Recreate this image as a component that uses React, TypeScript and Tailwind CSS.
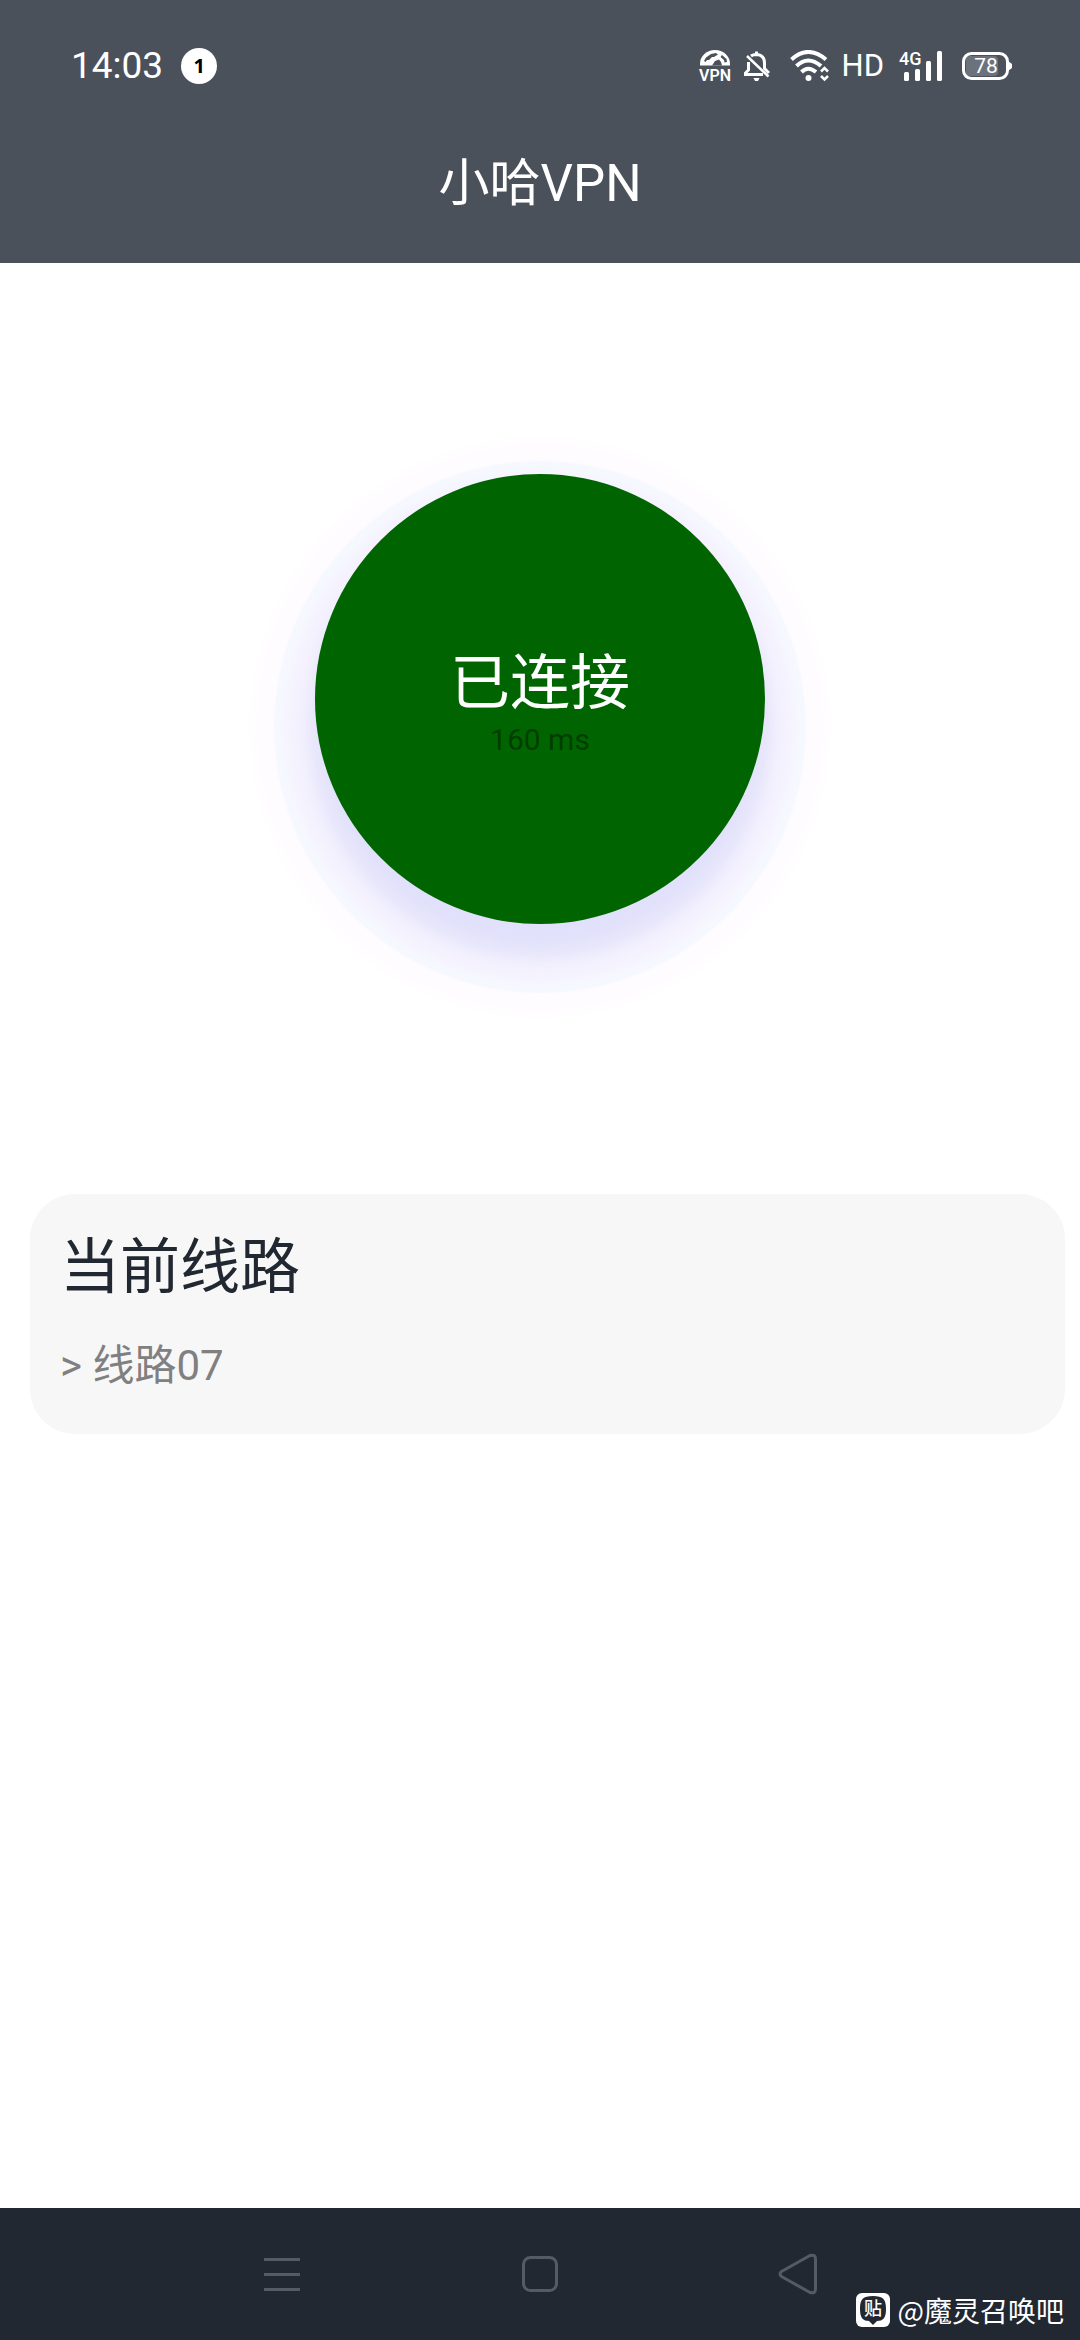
import React from 'react';

const navItems = [
    { id: 'recents', label: '最近任务' },
    { id: 'home', label: '主屏幕' },
    { id: 'back', label: '返回' }
];

const VpnIcon: React.FC = () => (
    <svg width="34" height="44" viewBox="-2 -6 34 44" fill="none" aria-hidden="true">
        <path d="M0 15.500 V14 A15 14 0 0 1 30 14 V15.500 Z" fill="#fff" />
        <path d="M4 11 L6 7.500 L11 4 L16 3 L18 4.500 L14 7 L12 7 L9 10 L7 10 L5.500 12 Z" fill="#4b515b" />
        <path d="M12 15.500 L15 11 L19 9.500 L21 12 L22 15.500 Z" fill="#4b515b" />
        <path d="M22 5 L26.500 9 L27 12 L24.500 12.500 L24 10 L20.500 7 Z" fill="#4b515b" />
        <text x="15" y="31" fill="#fff" fontSize="16" fontWeight="600" textAnchor="middle" fontFamily="'Liberation Sans Narrow', Roboto, sans-serif">VPN</text>
    </svg>
);

const BellOffIcon: React.FC = () => (
    <svg width="26" height="31" viewBox="0 0 26 31" fill="none" stroke="#fff" strokeWidth="3" aria-hidden="true">
        <path d="M7 5 Q9 3.500 12.500 3.500 Q20.500 4 20.500 12 V18" />
        <path d="M4.500 11 V19 L1.500 22 V23.500 H19" />
        <path d="M12.500 0.500 V4" />
        <path d="M3 5 L24.500 25.500" strokeWidth="2.500" />
        <path d="M20 17 L25 22" />
        <path d="M9.500 27 H15.500 L14 30 H11 Z" fill="#fff" stroke="none" />
    </svg>
);

const WifiIcon: React.FC = () => (
    <svg width="40" height="32" viewBox="0 0 40 32" fill="none" stroke="#fff" strokeWidth="4" aria-hidden="true">
        <path d="M1.500 9.500 Q18 -5.500 36 9.500" />
        <path d="M6.500 16 Q18 5 31 16" />
        <path d="M11.500 22 Q18 15.500 26 22" />
        <circle cx="18.500" cy="28" r="3" fill="#fff" stroke="none" />
        <path d="M31 21.500 L34.500 18 L38 21.500 M31 26 L34.500 29.500 L38 26" strokeWidth="2.500" />
    </svg>
);

const SignalIcon: React.FC = () => (
    <svg width="48" height="44" viewBox="0 -6 48 44" fill="#fff" aria-hidden="true">
        <text x="1" y="15" fontSize="18" fontWeight="500" fontFamily="Roboto, sans-serif">4G</text>
        <rect x="6" y="22" width="5" height="9" rx="1.500" />
        <rect x="17" y="19" width="5" height="12" rx="1.500" />
        <rect x="28" y="11" width="5" height="20" rx="1.500" />
        <rect x="39" y="1" width="5" height="30" rx="1.500" />
    </svg>
);

const BatteryIcon: React.FC = () => (
    <svg width="51" height="28" viewBox="0 0 51 28" aria-hidden="true">
        <rect x="4" y="4" width="32" height="20" rx="4" fill="#6c727b" />
        <rect x="1.500" y="1.500" width="44" height="25" rx="8" fill="none" stroke="#fff" strokeWidth="3" />
        <path d="M46 9 L50 12 V16 L46 19 Z" fill="#fff" />
        <text x="24" y="21" fill="#fff" fontSize="21" textAnchor="middle" fontFamily="Roboto, sans-serif">78</text>
    </svg>
);

const NavIcon: React.FC<{ id: string }> = ({ id }) => (
    <svg width="40" height="42" viewBox="0 0 40 42" fill="none" stroke="#555b65" strokeWidth="3" strokeLinejoin="round" aria-hidden="true">
        {id === 'recents' && <path d="M2 6.500 H38 M2 21.500 H38 M2 36.500 H38" />}
        {id === 'home' && <rect x="3.500" y="4.500" width="33" height="33" rx="7" />}
        {id === 'back' && (
            <path d="M3.500 18.500 L32 2.500 Q37.500 1 37.500 6 V36 Q37.500 41 32 39.500 L3.500 23.500 Q0.500 21 3.500 18.500 Z" />
        )}
    </svg>
);

const StatusBar: React.FC = () => (
    <div className="flex h-33 items-center justify-between pl-[71px] pr-[67px]">
        <div className="flex items-center gap-[18px]">
            <span className="text-[37px] leading-10">14:03</span>
            <span className="flex size-9 items-center justify-center rounded-full bg-white font-['Open_Sans'] text-xl font-bold text-black">1</span>
        </div>
        <div className="flex items-center">
            <VpnIcon />
            <div className="ml-3"><BellOffIcon /></div>
            <div className="ml-5"><WifiIcon /></div>
            <span className="ml-3 text-[31px] leading-8">HD</span>
            <div className="ml-3.5"><SignalIcon /></div>
            <div className="ml-4"><BatteryIcon /></div>
        </div>
    </div>
);

const Watermark: React.FC = () => (
    <div className="absolute bottom-3 right-4 flex items-center gap-2 font-['Noto_Sans_CJK_SC',sans-serif] text-[28px] leading-9 text-white">
        <svg width="34" height="34" viewBox="0 0 34 34" aria-hidden="true">
            <rect width="34" height="34" rx="6" fill="#fff" />
            <path d="M17 3 C27 3 30 6 30 16 C30 25 27 28 21 28 L17 32 L13 28 C7 28 4 25 4 16 C4 6 7 3 17 3 Z" fill="#222831" />
            <text x="17" y="22" fill="#fff" fontSize="18" fontWeight="500" textAnchor="middle" fontFamily="'Noto Sans CJK SC', sans-serif">贴</text>
        </svg>
        <span>@魔灵召唤吧</span>
    </div>
);

export default function App() {
    return (
        <div className="flex min-h-screen flex-col bg-white font-[Roboto,'Noto_Sans_CJK_SC',sans-serif]">
            <header className="bg-[#4b515b] text-white">
                <StatusBar />
                <h1 className="pb-10 pt-3 text-center text-[51px] leading-[79px]">小哈VPN</h1>
            </header>

            <main className="flex flex-1 flex-col pt-[211px]">
                {/* stepped halo around the connect button, sits a bit lower than the button */}
                <button className="flex size-[450px] flex-col items-center justify-center self-center rounded-full bg-[#006400] pt-2.5 shadow-[0_28px_12px_-6px_#e1e1fb,0_28px_6px_6px_#e8e7fb,0_28px_6px_15px_#f0eefd,0_28px_8px_29px_#f5f2fe,0_28px_2px_41px_#f6f8ff,0_28px_12px_62px_#fffcff]">
                    <span className="text-[60px] leading-[72px] text-white">已连接</span>
                    <span className="text-[30px] leading-10 text-black/40">160 ms</span>
                </button>

                <section className="ml-[30px] mr-[15px] mt-[270px] rounded-[45px] bg-[#f7f7f7] px-[30px] pb-[38px] pt-[38px]">
                    <h2 className="text-[60px] leading-[72px] text-[#222831]">当前线路</h2>
                    <p className="mt-8 text-[42px] leading-[60px] text-[#808080]">&gt; 线路07</p>
                </section>
            </main>

            <footer className="relative flex h-33 items-center justify-center gap-[218px] bg-[#222831]">
                {navItems.map(item => (
                    <button key={item.id} aria-label={item.label}>
                        <NavIcon id={item.id} />
                    </button>
                ))}
                <Watermark />
            </footer>
        </div>
    );
}
